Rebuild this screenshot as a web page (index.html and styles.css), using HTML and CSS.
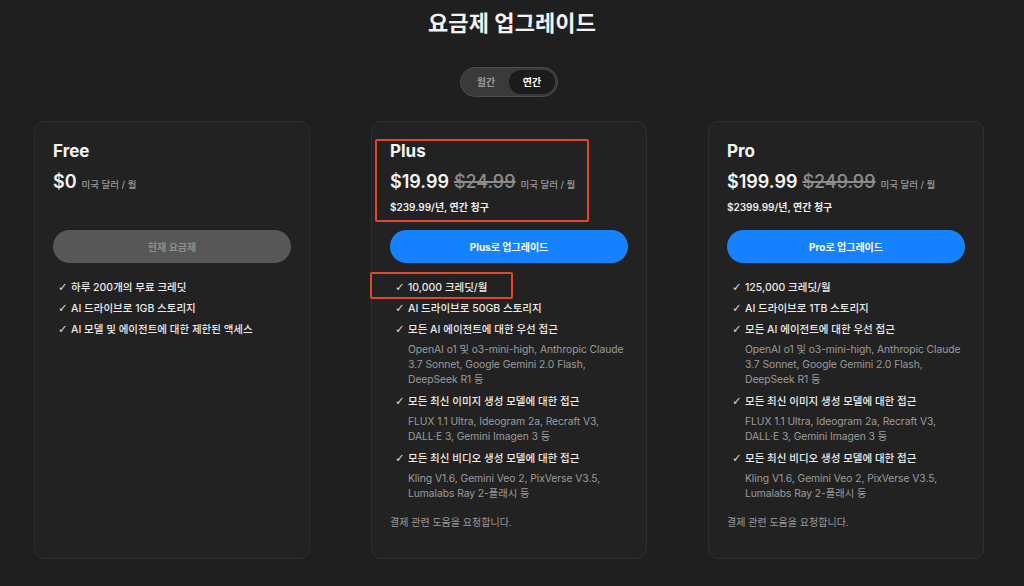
FILE: index.html
```html
<!DOCTYPE html>
<html lang="ko">
<head>
<meta charset="utf-8">
<title>요금제 업그레이드</title>
<link rel="stylesheet" href="styles.css">
</head>
<body>
<main class="page">
  <h1 class="title">요금제 업그레이드</h1>
  <div class="toggle">
    <span class="toggle-opt">월간</span>
    <span class="toggle-opt active">연간</span>
  </div>
  <section class="plans">
    <article class="card">
      <h2 class="plan-name">Free</h2>
      <div class="price-row"><span class="price">$0</span><span class="unit">미국 달러 / 월</span></div>
      <div class="annual empty"></div>
      <button class="btn btn-current">현재 요금제</button>
      <ul class="features">
        <li class="feat"><span class="check">✓</span><span>하루 200개의 무료 크레딧</span></li>
        <li class="feat"><span class="check">✓</span><span>AI 드라이브로 1GB 스토리지</span></li>
        <li class="feat"><span class="check">✓</span><span>AI 모델 및 에이전트에 대한 제한된 액세스</span></li>
      </ul>
    </article>

    <article class="card">
      <div class="mark mark-head"></div>
      <div class="mark mark-feat"></div>
      <h2 class="plan-name">Plus</h2>
      <div class="price-row"><span class="price">$19.99</span><span class="old">$24.99</span><span class="unit">미국 달러 / 월</span></div>
      <div class="annual">$239.99/년, 연간 청구</div>
      <button class="btn btn-blue">Plus로 업그레이드</button>
      <ul class="features">
        <li class="feat"><span class="check">✓</span><span>10,000 크레딧/월</span></li>
        <li class="feat"><span class="check">✓</span><span>AI 드라이브로 50GB 스토리지</span></li>
        <li class="feat"><span class="check">✓</span><span>모든 AI 에이전트에 대한 우선 접근</span></li>
        <li class="sub">OpenAI o1 및 o3-mini-high, Anthropic Claude 3.7 Sonnet, Google Gemini 2.0 Flash, DeepSeek R1 등</li>
        <li class="feat"><span class="check">✓</span><span>모든 최신 이미지 생성 모델에 대한 접근</span></li>
        <li class="sub">FLUX 1.1 Ultra, Ideogram 2a, Recraft V3, DALL·E 3, Gemini Imagen 3 등</li>
        <li class="feat"><span class="check">✓</span><span>모든 최신 비디오 생성 모델에 대한 접근</span></li>
        <li class="sub">Kling V1.6, Gemini Veo 2, PixVerse V3.5, Lumalabs Ray 2-플래시 등</li>
      </ul>
      <p class="help">결제 관련 도움을 요청합니다.</p>
    </article>

    <article class="card">
      <h2 class="plan-name">Pro</h2>
      <div class="price-row"><span class="price">$199.99</span><span class="old">$249.99</span><span class="unit">미국 달러 / 월</span></div>
      <div class="annual">$2399.99/년, 연간 청구</div>
      <button class="btn btn-blue">Pro로 업그레이드</button>
      <ul class="features">
        <li class="feat"><span class="check">✓</span><span>125,000 크레딧/월</span></li>
        <li class="feat"><span class="check">✓</span><span>AI 드라이브로 1TB 스토리지</span></li>
        <li class="feat"><span class="check">✓</span><span>모든 AI 에이전트에 대한 우선 접근</span></li>
        <li class="sub">OpenAI o1 및 o3-mini-high, Anthropic Claude 3.7 Sonnet, Google Gemini 2.0 Flash, DeepSeek R1 등</li>
        <li class="feat"><span class="check">✓</span><span>모든 최신 이미지 생성 모델에 대한 접근</span></li>
        <li class="sub">FLUX 1.1 Ultra, Ideogram 2a, Recraft V3, DALL·E 3, Gemini Imagen 3 등</li>
        <li class="feat"><span class="check">✓</span><span>모든 최신 비디오 생성 모델에 대한 접근</span></li>
        <li class="sub">Kling V1.6, Gemini Veo 2, PixVerse V3.5, Lumalabs Ray 2-플래시 등</li>
      </ul>
      <p class="help">결제 관련 도움을 요청합니다.</p>
    </article>
  </section>
</main>
</body>
</html>
```

FILE: styles.css
```css
* { box-sizing: border-box; }
html, body { margin: 0; padding: 0; }
body {
  background: #1f1f1f;
  color: #f2f2f2;
  font-family: Inter, "Noto Sans CJK KR", "Noto Sans", sans-serif;
  width: 1024px;
  height: 586px;
  overflow: hidden;
}
.page {
  display: flex;
  flex-direction: column;
  align-items: center;
  padding-top: 8px;
}
.title {
  margin: 0;
  font-size: 22px;
  line-height: 30px;
  font-weight: 700;
  letter-spacing: 0.1px;
}
.toggle {
  margin-top: 29px;
  margin-right: 6px;
  display: flex;
  align-items: center;
  width: 98px;
  height: 30px;
  padding: 2px;
  border: 1.5px solid #4c4c4c;
  border-radius: 15px;
  background: #3a3a3a;
}
.toggle-opt {
  flex: 1;
  height: 24px;
  line-height: 24px;
  text-align: center;
  font-size: 10px;
  font-weight: 600;
  color: #9a9a9a;
  border-radius: 12px;
}
.toggle-opt.active {
  background: #1b1b1b;
  color: #ffffff;
  font-weight: 700;
}
.plans {
  margin-top: 24px;
  margin-right: 6px;
  display: grid;
  grid-template-columns: 276px 276px 276px;
  column-gap: 61px;
}
.card {
  position: relative;
  height: 438px;
  background: #222222;
  border: 1px solid #2f2f2f;
  border-radius: 10px;
  padding: 16px 18px 16px 18px;
}
.plan-name {
  margin: 0;
  font-size: 17px;
  line-height: 26px;
  font-weight: 700;
  color: #f5f5f5;
}
.price-row {
  margin-top: 7px;
  display: flex;
  align-items: baseline;
  gap: 5px;
  height: 26px;
}
.price {
  font-size: 18px;
  font-weight: 600;
  color: #f5f5f5;
}
.old {
  font-size: 18px;
  font-weight: 500;
  color: #8c8c8c;
  text-decoration: line-through;
  text-decoration-thickness: 1.5px;
}
.unit {
  font-size: 9.5px;
  color: #9a9a9a;
  font-weight: 500;
}
.annual {
  margin-top: 0;
  height: 20px;
  line-height: 20px;
  font-size: 10px;
  font-weight: 600;
  color: #eeeeee;
}
.btn {
  display: block;
  margin-top: 13px;
  width: 100%;
  height: 33px;
  border: none;
  border-radius: 17px;
  font-family: inherit;
  font-size: 10px;
  font-weight: 700;
}
.btn-blue {
  background: #1682ff;
  color: #ffffff;
}
.btn-current {
  background: #575757;
  color: #8e8e8e;
  font-weight: 600;
}
.features {
  list-style: none;
  margin: 13px 0 0 0;
  padding: 0 0 0 5px;
}
.feat {
  display: flex;
  align-items: center;
  height: 21px;
  font-size: 10.5px;
  font-weight: 500;
  color: #ececec;
}
.check {
  width: 13px;
  font-size: 11.5px;
  font-family: "DejaVu Sans", sans-serif;
  font-weight: 400;
  color: #d6d6d6;
}
.sub {
  padding-left: 13px;
  padding-right: 0;
  margin: 3px 0 3px 0;
  font-size: 10.3px;
  line-height: 15px;
  letter-spacing: -0.05px;
  color: #9c9c9c;
}
.help {
  margin: 13px 0 0 0;
  font-size: 10px;
  color: #9a9a9a;
}
.mark {
  position: absolute;
  border: 2px solid #e0472e;
  border-radius: 2px;
  pointer-events: none;
}
.mark-head {
  left: 3px;
  top: 17px;
  width: 214px;
  height: 83px;
}
.mark-feat {
  left: -2px;
  top: 150px;
  width: 143px;
  height: 27px;
}
```
